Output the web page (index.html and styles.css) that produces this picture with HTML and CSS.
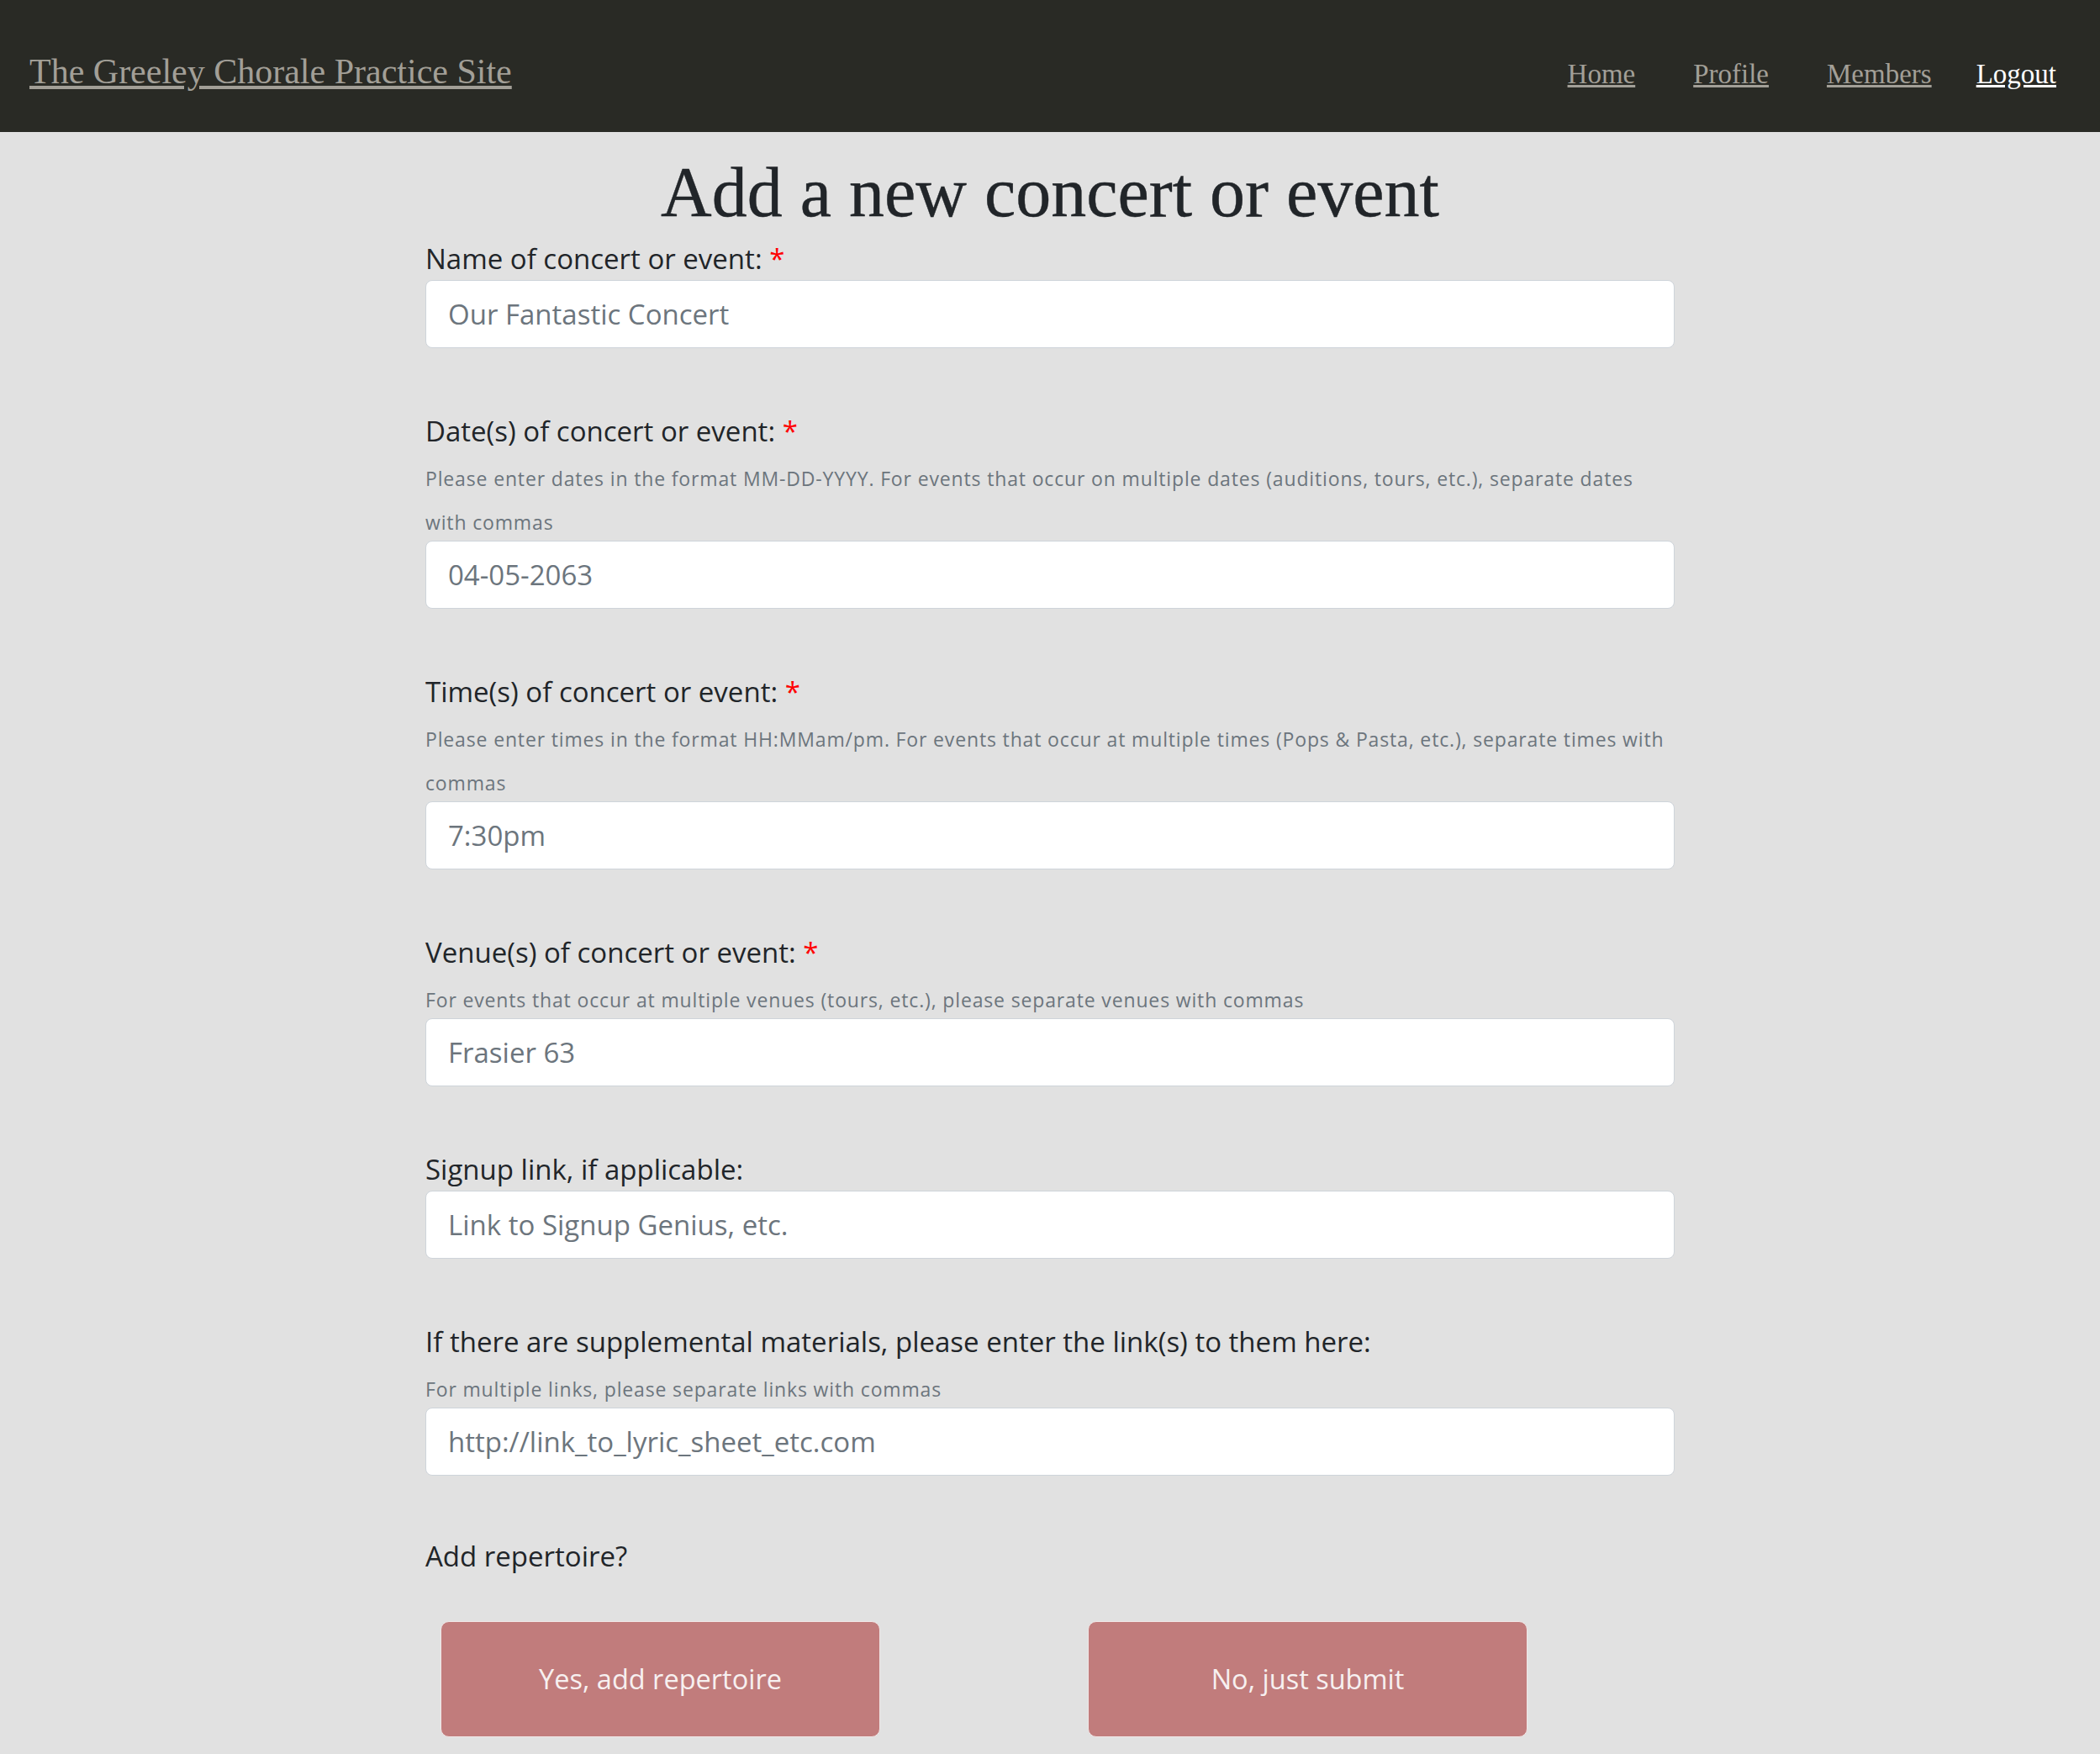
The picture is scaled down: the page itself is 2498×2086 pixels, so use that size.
FILE: index.html
```html
<!DOCTYPE html>
<html lang="en">
<head>
<meta charset="utf-8">
<title>Add a new concert or event</title>
<link rel="stylesheet" href="styles.css">
</head>
<body>
<header class="topbar">
  <a class="brand" href="#">The Greeley Chorale Practice Site</a>
  <nav class="nav">
    <ul class="nav-list">
      <li><a href="#" class="nav-link">Home</a></li>
      <li><a href="#" class="nav-link">Profile</a></li>
      <li><a href="#" class="nav-link">Members</a></li>
    </ul>
    <a href="#" class="nav-link nav-link--active">Logout</a>
  </nav>
</header>
<main class="page">
  <h1 class="page-title">Add a new concert or event</h1>
  <form class="event-form">
    <div class="field">
      <label class="field-label" for="name">Name of concert or event: <span class="req">*</span></label>
      <input class="field-input" id="name" type="text" placeholder="Our Fantastic Concert">
    </div>
    <div class="field">
      <label class="field-label" for="dates">Date(s) of concert or event: <span class="req">*</span></label>
      <p class="help"><small>Please enter dates in the format MM-DD-YYYY. For events that occur on multiple dates (auditions, tours, etc.), separate dates with commas</small></p>
      <input class="field-input" id="dates" type="text" placeholder="04-05-2063">
    </div>
    <div class="field">
      <label class="field-label" for="times">Time(s) of concert or event: <span class="req">*</span></label>
      <p class="help"><small>Please enter times in the format HH:MMam/pm. For events that occur at multiple times (Pops &amp; Pasta, etc.), separate times with commas</small></p>
      <input class="field-input" id="times" type="text" placeholder="7:30pm">
    </div>
    <div class="field">
      <label class="field-label" for="venues">Venue(s) of concert or event: <span class="req">*</span></label>
      <p class="help"><small>For events that occur at multiple venues (tours, etc.), please separate venues with commas</small></p>
      <input class="field-input" id="venues" type="text" placeholder="Frasier 63">
    </div>
    <div class="field">
      <label class="field-label" for="signup">Signup link, if applicable:</label>
      <input class="field-input" id="signup" type="text" placeholder="Link to Signup Genius, etc.">
    </div>
    <div class="field field--last">
      <label class="field-label" for="links">If there are supplemental materials, please enter the link(s) to them here:</label>
      <p class="help"><small>For multiple links, please separate links with commas</small></p>
      <input class="field-input" id="links" type="text" placeholder="http://link_to_lyric_sheet_etc.com">
    </div>
    <div class="repertoire">
      <p class="question">Add repertoire?</p>
      <div class="actions">
        <button type="button" class="btn">Yes, add repertoire</button>
        <button type="submit" class="btn">No, just submit</button>
      </div>
    </div>
  </form>
</main>
</body>
</html>
```

FILE: styles.css
```css
* {
  box-sizing: border-box;
}

html,
body {
  margin: 0;
  padding: 0;
}

body {
  background: #e1e1e1;
  color: #212529;
  font-family: "Open Sans", "Noto Sans", sans-serif;
}

.topbar {
  height: 157px;
  background: #292a25;
  display: flex;
  align-items: baseline;
  justify-content: space-between;
  padding: 61px 52px 0 35px;
  font-family: "Liberation Serif", "Times New Roman", serif;
}

.brand {
  font-size: 42px;
  color: #a29f97;
  text-decoration: underline;
}

.nav {
  display: flex;
  align-items: baseline;
}

.nav-list {
  list-style: none;
  margin: 0;
  padding: 0;
  display: flex;
  align-items: baseline;
  gap: 69px;
}

.nav-link {
  font-size: 33px;
  color: #a29f97;
  text-decoration: underline;
}

.nav-link--active {
  color: #ffffff;
  margin-left: 53px;
}

.page {
  width: 1486px;
  margin: 0 auto;
}

.page-title {
  margin: 22px 0 3px;
  font-family: "Liberation Serif", "Times New Roman", serif;
  font-size: 84px;
  font-weight: 400;
  line-height: 1.2;
  text-align: center;
  color: #212529;
  -webkit-text-stroke: 0.4px #212529;
}

.field {
  margin-bottom: 74px;
}

.field--last {
  margin-bottom: 71px;
}

.field-label {
  display: block;
  font-size: 33px;
  line-height: 50px;
}

.req {
  color: #ff0000;
}

.help {
  margin: 0;
  padding-top: 1px;
  font-size: 33px;
  line-height: 52px;
}

.help small {
  font-size: 23px;
  line-height: 1;
  letter-spacing: 0.85px;
  color: #6c757d;
  vertical-align: -1px;
}

.field-input {
  display: block;
  width: 100%;
  height: 81px;
  padding: 0 26px;
  font-family: inherit;
  font-size: 33px;
  color: #212529;
  background: #ffffff;
  border: 1px solid #ced4da;
  border-radius: 8px;
  outline: none;
}

.field-input::placeholder {
  color: #6c757d;
  opacity: 1;
}

.question {
  margin: 0 0 52px;
  font-size: 33px;
  line-height: 50px;
}

.actions {
  display: flex;
  gap: 247px;
  padding-left: 18px;
}

.btn {
  width: 523px;
  height: 138px;
  background: #c17c7c;
  color: #f7f0f0;
  border: 1px solid #f1e6e6;
  border-radius: 10px;
  font-family: inherit;
  font-size: 32.5px;
  cursor: pointer;
}
```
